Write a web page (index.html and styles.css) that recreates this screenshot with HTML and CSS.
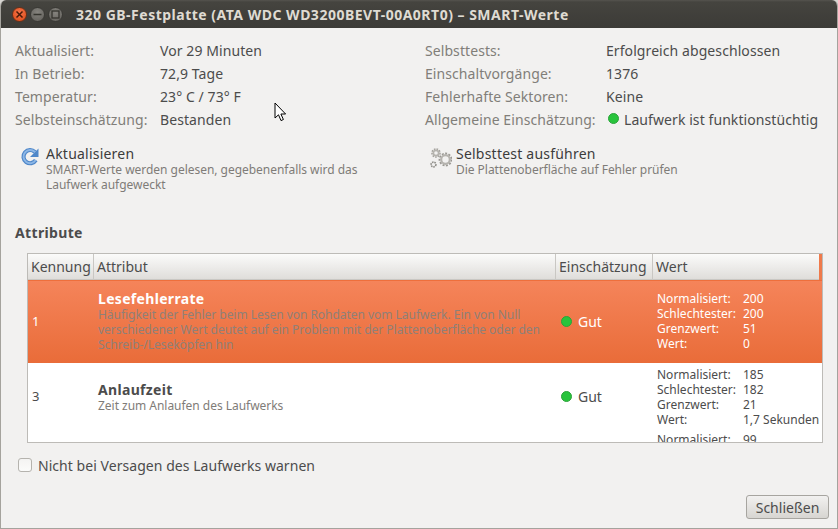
FILE: index.html
```html
<!DOCTYPE html>
<html lang="de">
<head>
<meta charset="utf-8">
<title>SMART-Werte</title>
<link rel="stylesheet" href="styles.css">
</head>
<body>
<div class="window">
  <header class="titlebar">
    <div class="controls">
      <span class="wbtn close"><svg width="9" height="9" viewBox="0 0 9 9"><path d="M1.5 1.5l6 6M7.5 1.5l-6 6" stroke="#4a1a08" stroke-width="1.5"/></svg></span>
      <span class="wbtn"><svg width="9" height="9" viewBox="0 0 9 9"><path d="M0.5 4.5h8" stroke="#35342f" stroke-width="1.5"/></svg></span>
      <span class="wbtn"><svg width="9" height="9" viewBox="0 0 9 9"><rect x="1" y="1" width="7" height="7" fill="none" stroke="#35342f" stroke-width="1.3"/></svg></span>
    </div>
    <h1 class="title">320 GB-Festplatte (ATA WDC WD3200BEVT-00A0RT0) – SMART-Werte</h1>
  </header>
  <main class="content">
    <section class="info">
      <span class="lbl">Aktualisiert:</span><span class="val">Vor 29 Minuten</span>
      <span class="lbl">Selbsttests:</span><span class="val">Erfolgreich abgeschlossen</span>
      <span class="lbl">In Betrieb:</span><span class="val">72,9 Tage</span>
      <span class="lbl">Einschaltvorgänge:</span><span class="val">1376</span>
      <span class="lbl">Temperatur:</span><span class="val">23° C / 73° F</span>
      <span class="lbl">Fehlerhafte Sektoren:</span><span class="val">Keine</span>
      <span class="lbl">Selbsteinschätzung:</span><span class="val">Bestanden</span>
      <span class="lbl">Allgemeine Einschätzung:</span><span class="val status"><i class="dot"></i>Laufwerk ist funktionstüchtig</span>
    </section>
    <section class="actions">
      <div class="action">
        <svg class="aicon" width="18" height="19" viewBox="0 0 19 20">
          <path d="M14.6 5.2A7 7 0 1 0 15.6 13.8" fill="none" stroke="#4f87c9" stroke-width="4.4"/>
          <path d="M14.6 5.2A7 7 0 1 0 15.6 13.8" fill="none" stroke="#8db7e6" stroke-width="2"/>
          <path d="M18.5 1.5V10.5H9.5z" fill="#4f87c9"/>
        </svg>
        <div class="atext">
          <div class="atitle">Aktualisieren</div>
          <div class="adesc">SMART-Werte werden gelesen, gegebenenfalls wird das<br>Laufwerk aufgeweckt</div>
        </div>
      </div>
      <div class="action second">
        <svg class="aicon" width="22" height="22" viewBox="0 0 22 22">
          <g fill="none">
            <circle cx="15.5" cy="11.5" r="6" stroke="#9a9893" stroke-width="1.8" stroke-dasharray="2 1.4"/>
            <circle cx="15.5" cy="11.5" r="4.3" stroke="#b5b3ae" stroke-width="2.2"/>
            <circle cx="6" cy="5" r="4" stroke="#a3a19c" stroke-width="1.6" stroke-dasharray="1.6 1.1"/>
            <circle cx="6" cy="5" r="2.7" stroke="#b5b3ae" stroke-width="1.8"/>
            <circle cx="3.5" cy="16.5" r="2.4" stroke="#8a8883" stroke-width="1.6" stroke-dasharray="1.4 .8"/>
          </g>
        </svg>
        <div class="atext">
          <div class="atitle">Selbsttest ausführen</div>
          <div class="adesc">Die Plattenoberfläche auf Fehler prüfen</div>
        </div>
      </div>
    </section>
    <h2 class="heading">Attribute</h2>
    <div class="tablebox">
      <div class="thead">
        <div class="th">Kennung</div>
        <div class="th">Attribut</div>
        <div class="th">Einschätzung</div>
        <div class="th">Wert</div>
      </div>
      <div class="row selected">
        <div class="cell">1</div>
        <div class="cell attr"><b>Lesefehlerrate</b><span>Häufigkeit der Fehler beim Lesen von Rohdaten vom Laufwerk. Ein von Null<br>verschiedener Wert deutet auf ein Problem mit der Plattenoberfläche oder den<br>Schreib-/Leseköpfen hin</span></div>
        <div class="cell ass"><i class="dot"></i>Gut</div>
        <div class="cell vals"><span>Normalisiert:</span><span>200</span><span>Schlechtester:</span><span>200</span><span>Grenzwert:</span><span>51</span><span>Wert:</span><span>0</span></div>
      </div>
      <div class="row">
        <div class="cell">3</div>
        <div class="cell attr"><b>Anlaufzeit</b><span>Zeit zum Anlaufen des Laufwerks</span></div>
        <div class="cell ass"><i class="dot"></i>Gut</div>
        <div class="cell vals"><span>Normalisiert:</span><span>185</span><span>Schlechtester:</span><span>182</span><span>Grenzwert:</span><span>21</span><span>Wert:</span><span>1,7 Sekunden</span></div>
      </div>
      <div class="row">
        <div class="cell"></div>
        <div class="cell attr"></div>
        <div class="cell ass"></div>
        <div class="cell vals"><span>Normalisiert:</span><span>99</span></div>
      </div>
    </div>
    <label class="check"><span class="box"></span>Nicht bei Versagen des Laufwerks warnen</label>
    <div class="footer"><button class="btn" type="button">Schließen</button></div>
  </main>
  <svg class="cursor" width="14" height="21" viewBox="0 0 14 21"><path d="M1 1V16L4.5 12.8L7 18.6L9.4 17.5L6.9 12H11.6z" fill="#fff" stroke="#000" stroke-width="1"/></svg>
</div>
</body>
</html>
```
FILE: styles.css
```css
* { box-sizing: border-box; }
html, body { margin: 0; padding: 0; width: 838px; height: 529px; overflow: hidden; background: #d8d6d2; }
body { font-family: "Noto Sans", "Open Sans", sans-serif; font-size: 14px; color: #4c4c4c; }
.window { position: relative; width: 838px; height: 529px; display: flex; flex-direction: column; background: #f2f1f0; border-radius: 6px 6px 0 0; overflow: hidden; border-left: 1px solid #a5a39d; border-right: 1px solid #a5a39d; border-bottom: 1px solid #a5a39d; }
.titlebar { flex: none; height: 28px; margin: 0 -1px; display: flex; align-items: center; background: linear-gradient(#55534e 0, #45443f 2px, #3c3b37 100%); }
.controls { display: flex; gap: 3px; margin-left: 12px; width: 64px; }
.wbtn { width: 15px; height: 15px; border-radius: 50%; background: radial-gradient(circle at 50% 35%, #85837e, #5f5d58); border: 1px solid #3a3935; display: flex; align-items: center; justify-content: center; }
.wbtn.close { background: radial-gradient(circle at 50% 35%, #f4744a, #dd4814); border-color: #6a3018; }
.title { margin: 0; font-size: 14px; font-weight: 700; letter-spacing: .5px; color: #dfdbd2; white-space: nowrap; }
.content { flex: 1; padding: 11px 8px 0 14px; display: flex; flex-direction: column; }
.info { display: grid; grid-template-columns: 145px 265px 181px 1fr; grid-auto-rows: 23px; align-items: center; line-height: 23px; white-space: nowrap; letter-spacing: .08px; }
.lbl { color: #817e79; }
.val { color: #4c4c4c; }
.status { display: flex; align-items: center; }
.dot { display: inline-block; flex: none; width: 11px; height: 11px; border-radius: 50%; background: #28c43c; border: 1px solid #2ba33a; }
.status .dot { margin: -3px 5px 0 2px; }
.actions { display: grid; grid-template-columns: 410px 1fr; margin-top: 15px; height: 46px; }
.action { display: flex; padding-left: 6px; }
.aicon { flex: none; margin-top: 1px; }
.action .atext { margin-left: 7px; }
.action.second { padding-left: 5px; }
.action.second .aicon { margin-top: 2px; }
.action.second .atext { margin-left: 4px; }
.atitle { font-size: 14px; line-height: 16px; letter-spacing: .22px; color: #3c3c3c; white-space: nowrap; }
.adesc { font-size: 12px; line-height: 15px; letter-spacing: -.03px; color: #7f7c78; white-space: nowrap; }
.heading { margin: 32px 0 0; font-size: 14px; line-height: 18px; font-weight: 700; letter-spacing: .35px; color: #4c4c4c; }
.tablebox { margin: 11px 0 0 12px; width: 796px; height: 190px; flex: none; border: 1px solid #bdbbb7; background: #fff; overflow: hidden; }
.thead, .row { display: grid; grid-template-columns: 66px 462px 97px 1fr; }
.thead { height: 26px; background: #ef7a4b; padding-right: 3px; }
.th { height: 26px; line-height: 25px; padding-left: 3px; font-size: 14px; color: #4c4c4c; background: linear-gradient(#fbfbfa, #dedcd9); border-right: 1px solid #c9c7c3; box-shadow: inset 0 -1px 0 #c9c7c3; white-space: nowrap; overflow: hidden; }
.th:last-child { border-right: 0; }
.row { padding: 2px 0; line-height: 15px; font-size: 12px; color: #4c4c4c; }
.row.selected { background: linear-gradient(#f5845a, #e96c39); border-top: 1px solid #ee6f3c; color: #fff; padding: 10px 0 11px; }
.row.selected + .row { padding: 3px 0 3.5px; }
.row.selected + .row .vals, .row.selected + .row .attr { margin: 1px 0 -1px; }
.cell { display: flex; align-items: center; padding-left: 4px; font-size: 13px; white-space: nowrap; }
.attr { flex-direction: column; align-items: flex-start; justify-content: center; font-size: 12px; letter-spacing: -.03px; }
.attr b { font-size: 14px; line-height: 16px; letter-spacing: .32px; color: #4c4c4c; }
.attr span { color: #7f7c78; }
.selected .attr b { color: #fff; }
.selected .attr span { color: #8f8078; }
.ass { padding-left: 5px; font-size: 14px; }
.ass .dot { margin-right: 6px; }
.vals { display: grid; grid-template-columns: 86px auto; justify-content: start; font-size: 12px; align-items: start; }
.selected .vals { margin: -.5px 0 .5px; }
.check { display: flex; align-items: center; height: 20px; margin: 12px 0 0 3px; letter-spacing: .05px; color: #4c4c4c; white-space: nowrap; }
.box { width: 14px; height: 14px; border: 1px solid #b5b3ae; border-radius: 3px; background: linear-gradient(#f4f3f2, #fbfbfa); margin-right: 6px; }
.footer { display: flex; justify-content: flex-end; margin-top: 20px; }
.btn { width: 83px; height: 24px; padding: 0; border: 1px solid #a7a5a0; border-radius: 3px; background: linear-gradient(#f2f1f0, #d7d5d1); font: inherit; font-size: 14px; color: #4c4c4c; }
.cursor { position: absolute; left: 273px; top: 102px; }
```
